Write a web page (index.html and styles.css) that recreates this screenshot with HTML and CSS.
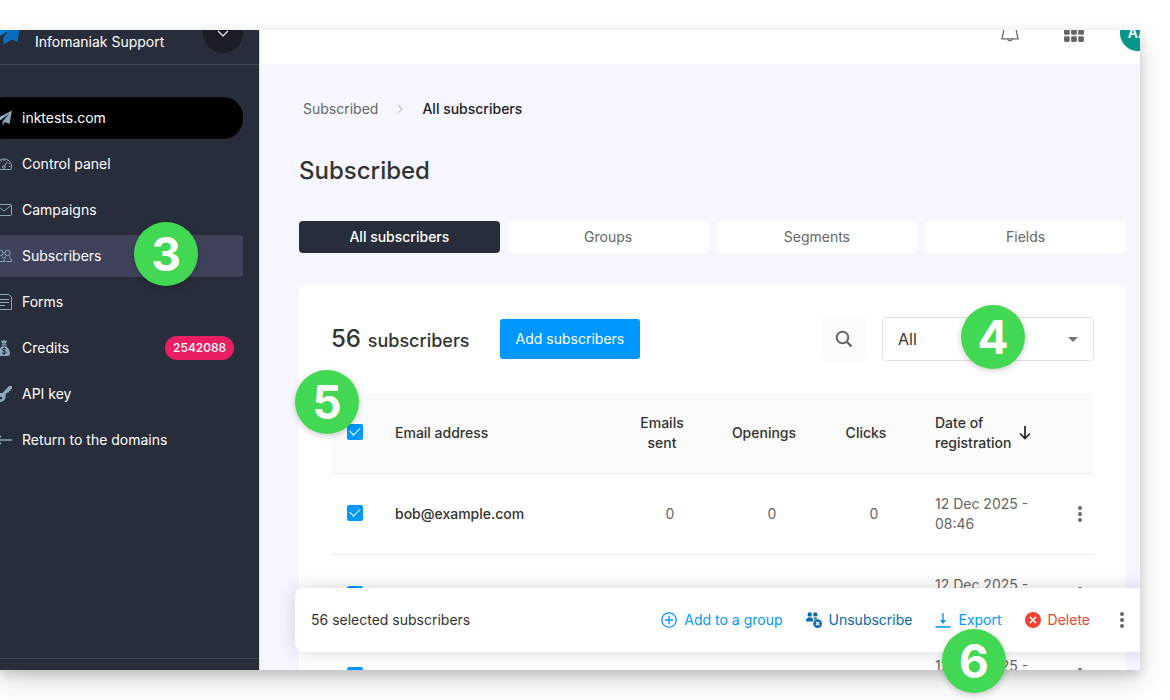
FILE: index.html
```html
<!DOCTYPE html>
<html lang="en">
  <head>
    <meta charset="UTF-8" />
    <meta name="viewport" content="width=device-width, initial-scale=1.0" />
    <title>Subscribed</title>
    <link rel="stylesheet" href="styles.css">
  </head>
  <body>
    <div class="stage">
      <div class="window">
        <aside class="sidebar">
          <div class="account">
            <svg class="account-logo" width="24" height="30" viewBox="0 0 24 30">
              <path d="M24.500 8L21.500 26 16 23.500 7.500 28.500V21L13 14.500 16 8z" fill="#0a6ebd" />
              <path d="M0 14h14l-6 3.500-4 2.500-4-1z" fill="#0b7fd6" />
            </svg>
            <span class="account-name">Infomaniak Support</span>
            <button class="account-toggle" aria-label="Switch account">
              <svg width="12" height="8" viewBox="0 0 12 8" fill="none" stroke="#fff" stroke-width="1.2">
                <path d="M1 1l5 5 5-5" />
              </svg>
            </button>
          </div>
          <nav class="menu">
            <a class="menu-item domain" href="#">
              <svg class="menu-icon" viewBox="0 0 16 16" fill="#8ba7b8">
                <path d="M16 0.500L13.500 14l-4.800-2L6.500 15.500V11.500L13 4 4.500 10.200 0 8.700z" />
              </svg>
              inktests.com
            </a>
            <a class="menu-item" href="#">
              <svg class="menu-icon" viewBox="0 0 16 16" fill="none" stroke="#8ba7b8">
                <path d="M1.500 13.500C-1 9 2 3 8 3s9 6 7 10.500zM8 11l3-5M8 3v2M3 6l1.300 1M14 7l-1.500.8M2 10h1.500M13 10.500h1.500M4.500 4l1 1.500M12 4.500l-.5.8" />
                <circle cx="7.800" cy="11" r="1.300" />
              </svg>
              Control panel
            </a>
            <a class="menu-item" href="#">
              <svg class="menu-icon" viewBox="0 0 16 16" fill="none" stroke="#8ba7b8">
                <rect x="0.500" y="2.500" width="15" height="11" rx="1" />
                <path d="M1 3.500l7 5.500 7-5.500" />
              </svg>
              Campaigns
            </a>
            <a class="menu-item selected" href="#">
              <svg class="menu-icon" viewBox="0 0 16 16" fill="none" stroke="#8ba7b8">
                <circle cx="4.500" cy="5" r="2.700" />
                <circle cx="11.500" cy="5" r="2.700" />
                <path d="M.5 13.500c0-3 1.500-3.500 3-4.500M6 9c1.500 1 2.500 1.500 3 4.500h-8.500M10 8.500c-1 1-1.500 1-2.500 1.700M13 8.500c1.500 1.500 2.500 2 2.500 5h-5" />
              </svg>
              Subscribers
            </a>
            <a class="menu-item" href="#">
              <svg class="menu-icon" viewBox="0 0 16 16" fill="none" stroke="#8ba7b8">
                <path d="M.5.500h12l3 2.500v12.500H.5zM3 5.500h10M3 8.500h10M3 11.500h6" />
              </svg>
              Forms
            </a>
            <a class="menu-item" href="#">
              <svg class="menu-icon" viewBox="0 0 16 16">
                <path d="M5 0l1.500 1L8 0l1.500 1L11 0l-1 3.500H6zM5.500 4.300h5v1.200h-5zM6 6.200h4c2.500 2 4 4.500 4 7 0 1.800-1 2.800-2.500 2.800h-7C3 16 2 15 2 13.200c0-2.500 1.500-5 4-7z" fill="#8ba7b8" />
                <path d="M10 9c-1-1-3.500-.8-3.500.7S10 11 10 12.500s-3 1.500-4 .4M8.200 7.500V15" fill="none" stroke="#282d3b" />
              </svg>
              Credits
              <span class="credits">2542088</span>
            </a>
            <a class="menu-item" href="#">
              <svg class="menu-icon" viewBox="0 0 16 16">
                <path d="M13 0h3v3l-1.500.5V5H13v1.500h-1.500L9.500 8.500c1 4-1.500 7.500-5.500 7.500C1.500 16 0 14 0 12c0-3.500 3-5.500 6.500-5z" fill="#8ba7b8" />
                <circle cx="5" cy="12" r="1.300" fill="#282d3b" />
              </svg>
              API key
            </a>
            <a class="menu-item" href="#">
              <svg class="menu-icon" viewBox="0 0 16 16" fill="none" stroke="#8ba7b8" stroke-width="1.500">
                <path d="M0 8h16M5 4L1 8l4 4" />
              </svg>
              Return to the domains
            </a>
          </nav>
          <div class="sidebar-footer"></div>
        </aside>

        <div class="content">
          <header class="topbar">
            <button class="icon-button bell" aria-label="Notifications">
              <svg width="18" height="20" viewBox="0 0 18 20" fill="none" stroke="#666" stroke-width="1.300">
                <path d="M1 16.800L2.800 8C3.500 4 5 1.500 9 1.500s5.500 2.500 6.200 6.500L17 16.800zM6.500 17c.5 2.600 4.500 2.600 5 0" />
              </svg>
            </button>
            <button class="icon-button apps" aria-label="Applications">
              <svg width="20" height="20" viewBox="0 0 20 20" fill="#666">
                <rect width="5.700" height="5.700" rx="1.300" /><rect x="7.100" width="5.700" height="5.700" rx="1.300" /><rect x="14.200" width="5.700" height="5.700" rx="1.300" />
                <rect y="7.100" width="5.700" height="5.700" rx="1.300" /><rect x="7.100" y="7.100" width="5.700" height="5.700" rx="1.300" /><rect x="14.200" y="7.100" width="5.700" height="5.700" rx="1.300" />
                <rect y="14.200" width="5.700" height="5.700" rx="1.300" /><rect x="7.100" y="14.200" width="5.700" height="5.700" rx="1.300" /><rect x="14.200" y="14.200" width="5.700" height="5.700" rx="1.300" />
              </svg>
            </button>
            <button class="avatar">AA</button>
          </header>

          <main class="page">
            <nav class="breadcrumb">
              <a href="#">Subscribed</a>
              <svg width="6" height="10" viewBox="0 0 6 10" fill="none" stroke="#aaa">
                <path d="M1 1l4 4-4 4" />
              </svg>
              <strong>All subscribers</strong>
            </nav>
            <h1>Subscribed</h1>

            <div class="tabs">
              <button class="tab active">All subscribers</button>
              <button class="tab">Groups</button>
              <button class="tab">Segments</button>
              <button class="tab">Fields</button>
            </div>

            <section class="card">
              <div class="toolbar">
                <h2 class="count"><span class="count-number">56</span> subscribers</h2>
                <button class="add-button">Add subscribers</button>
                <button class="search-button" aria-label="Search">
                  <svg width="18" height="18" viewBox="0 0 18 18" fill="none" stroke="#666" stroke-width="2">
                    <circle cx="7.500" cy="7.500" r="5.800" />
                    <path d="M12 12l4.500 4.500" stroke-width="2.400" />
                  </svg>
                </button>
                <div class="filter">
                  <select aria-label="Filter">
                    <option>All</option>
                  </select>
                  <svg class="filter-arrow" width="10" height="5" viewBox="0 0 10 5" fill="#757575">
                    <path d="M0 0h10L5 5z" />
                  </svg>
                </div>
              </div>

              <table class="list">
                <colgroup>
                  <col class="col-check" />
                  <col />
                  <col class="col-number" />
                  <col class="col-number" />
                  <col class="col-number" />
                  <col class="col-date" />
                  <col class="col-more" />
                </colgroup>
                <thead>
                  <tr>
                    <th><input type="checkbox" class="tick" aria-label="Select all" checked /></th>
                    <th class="email">Email address</th>
                    <th class="number">Emails<br />sent</th>
                    <th class="number">Openings</th>
                    <th class="number">Clicks</th>
                    <th class="date">
                      <span class="sort">
                        <span>Date of<br />registration</span>
                        <svg width="12" height="14" viewBox="0 0 12 14" fill="none" stroke="#222" stroke-width="1.700">
                          <path d="M6 0v12.500M1 7.500l5 5 5-5" />
                        </svg>
                      </span>
                    </th>
                    <th></th>
                  </tr>
                </thead>
                <tbody>
                  <tr>
                    <td><input type="checkbox" class="tick" aria-label="Select bob@example.com" checked /></td>
                    <td class="email">bob@example.com</td>
                    <td class="number">0</td>
                    <td class="number">0</td>
                    <td class="number">0</td>
                    <td class="date">12 Dec 2025 -<br />08:46</td>
                    <td class="more"><button class="dots" aria-label="More"><i></i><i></i><i></i></button></td>
                  </tr>
                  <tr>
                    <td><input type="checkbox" class="tick" aria-label="Select row" checked /></td>
                    <td class="email"></td>
                    <td class="number"></td>
                    <td class="number"></td>
                    <td class="number"></td>
                    <td class="date">12 Dec 2025 -<br />&nbsp;</td>
                    <td class="more"><button class="dots" aria-label="More"><i></i><i></i><i></i></button></td>
                  </tr>
                  <tr>
                    <td><input type="checkbox" class="tick" aria-label="Select row" checked /></td>
                    <td class="email"></td>
                    <td class="number"></td>
                    <td class="number"></td>
                    <td class="number"></td>
                    <td class="date">12 Dec 2025 -<br />&nbsp;</td>
                    <td class="more"><button class="dots" aria-label="More"><i></i><i></i><i></i></button></td>
                  </tr>
                </tbody>
              </table>
            </section>
          </main>

          <div class="action-bar">
            <span class="selected-count">56 selected subscribers</span>
            <button class="action add">
              <svg width="16" height="16" viewBox="0 0 16 16" fill="none" stroke="currentColor" stroke-width="1.300">
                <circle cx="8" cy="8" r="7.200" />
                <path d="M8 3.700v8.600M3.700 8h8.600" />
              </svg>
              Add to a group
            </button>
            <button class="action unsubscribe">
              <svg width="16" height="16" viewBox="0 0 16 16" fill="currentColor">
                <circle cx="3.700" cy="2.400" r="2.200" />
                <circle cx="9.300" cy="2.400" r="2.200" />
                <path d="M0 9.500c0-3 1.500-4.200 3.700-4.200S7 6.500 7 7.500v2zM7.800 5.700c1.500-.6 3.200-.3 4 1.100-1.700 0-2.700.4-3.600 1.300z" />
                <circle cx="11.600" cy="11.600" r="4.400" />
                <path d="M9.900 9.900l3.400 3.400M13.300 9.900l-3.400 3.400" stroke="#fff" stroke-width="1.300" />
              </svg>
              Unsubscribe
            </button>
            <button class="action export">
              <svg width="16" height="16" viewBox="0 0 16 16" fill="none" stroke="currentColor" stroke-width="1.400">
                <path d="M.5 15h15M8 1v9" />
                <path d="M5 8h6l-3 4z" fill="currentColor" stroke="none" />
              </svg>
              Export
            </button>
            <button class="action delete">
              <svg width="16" height="16" viewBox="0 0 16 16">
                <circle cx="8" cy="8" r="8" fill="currentColor" />
                <path d="M4.800 4.800l6.400 6.400M11.200 4.800l-6.400 6.400" stroke="#fff" stroke-width="1.500" />
              </svg>
              Delete
            </button>
            <button class="dots" aria-label="More actions"><i></i><i></i><i></i></button>
          </div>
        </div>
      </div>

      <!-- step markers -->
      <span class="step step-3">3</span>
      <span class="step step-4">4</span>
      <span class="step step-5">5</span>
      <span class="step step-6">6</span>
    </div>
  </body>
</html>
```

FILE: styles.css
```css
* {
  box-sizing: border-box;
}
body {
  margin: 0;
  background: #fff;
  color: #333;
  font: 14px/20px Inter, "Liberation Sans", sans-serif;
}
button,
select {
  font: inherit;
  color: inherit;
}
button {
  border: 0;
  padding: 0;
  background: none;
  cursor: pointer;
}
a {
  color: inherit;
  text-decoration: none;
}
svg {
  display: block;
  flex: none;
}

.stage {
  position: relative;
  height: 100vh;
  padding: 30px 30px 30px 0;
  overflow: hidden;
}
.window {
  display: flex;
  height: 100%;
  overflow: hidden;
  box-shadow: 0 12px 28px rgba(0, 0, 0, 0.14), 0 5px 10px rgba(0, 0, 0, 0.15);
}

/* sidebar */
.sidebar {
  display: flex;
  flex-direction: column;
  flex: none;
  width: 260px;
  background: #282d3b;
  border-right: 1px solid #dcdce6;
  color: #fff;
}
.account {
  display: flex;
  align-items: flex-end;
  height: 35px;
  padding-right: 16px;
  border-bottom: 1px solid #40435b;
}
.account-logo {
  margin: 0 15px 18px -4px;
}
.account-name {
  margin-bottom: 12px;
}
.account-toggle {
  display: flex;
  justify-content: center;
  width: 40px;
  height: 40px;
  margin: 0 0 11px auto;
  padding-top: 17px;
  border-radius: 50%;
  background: #1b1d27;
}
.menu {
  display: flex;
  flex-direction: column;
  gap: 4px;
  margin: 32px 16px 0 -16px;
}
.menu-item {
  display: flex;
  align-items: center;
  gap: 10px;
  height: 42px;
  padding: 0 9px 0 12px;
  border-radius: 4px;
}
.menu-icon {
  width: 16px;
  height: 16px;
}
.domain {
  background: #000;
  border-radius: 20px;
}
.selected {
  background: #40425b;
}
.credits {
  margin-left: auto;
  padding: 2px 8px;
  border-radius: 12px;
  background: #e91e63;
  font-size: 12px;
  font-weight: 500;
}
.sidebar-footer {
  height: 12px;
  margin-top: auto;
  border-top: 1px solid #40435b;
}

/* top bar */
.content {
  position: relative;
  flex: 1;
  min-width: 0;
  background: #f5f6ff;
}
.topbar {
  display: flex;
  justify-content: flex-end;
  align-items: flex-end;
  height: 35px;
  margin-right: -16px;
  background: #fff;
  border-bottom: 1px solid #f7f7fb;
}
.icon-button {
  margin-bottom: 22px;
}
.bell {
  margin-right: 45px;
}
.apps {
  margin-right: 36px;
}
.avatar {
  width: 36px;
  height: 36px;
  margin-bottom: 13px;
  border-radius: 50%;
  background: #059688;
  color: #fff;
  font-weight: 600;
}

/* page */
.page {
  padding: 34px 14px 0 39px;
}
.breadcrumb {
  display: flex;
  align-items: center;
  gap: 19px;
  padding-left: 4px;
  color: #666;
}
.breadcrumb strong {
  color: #222;
  font-weight: 500;
}
h1 {
  margin: 36px 0 34px;
  font-size: 24px;
  line-height: 32px;
  font-weight: 500;
}
.tabs {
  display: grid;
  grid-template-columns: repeat(4, 1fr);
  gap: 8px;
}
.tab {
  height: 32px;
  border-radius: 4px;
  background: #fff;
  color: #666;
}
.tab.active {
  background: #282d3b;
  color: #fff;
  font-weight: 500;
}
.card {
  margin-top: 32px;
  padding: 32px;
  border-radius: 6px;
  background: #fff;
}
.toolbar {
  display: flex;
  align-items: center;
  height: 44px;
  margin-bottom: 32px;
}
.count {
  margin: 2px 30px 0 0;
  font-size: 18px;
  line-height: 32px;
  font-weight: 500;
}
.count-number {
  margin-right: 2px;
  font-size: 24px;
}
.add-button {
  height: 40px;
  padding: 0 16px;
  border-radius: 3px;
  background: #0098ff;
  color: #fff;
}
.search-button {
  display: flex;
  align-items: center;
  justify-content: center;
  width: 44px;
  height: 44px;
  margin: 0 16px 0 auto;
  border-radius: 4px;
  background: #fafafa;
}
.filter {
  position: relative;
  width: 212px;
}
.filter select {
  display: block;
  width: 100%;
  height: 44px;
  padding: 0 15px;
  appearance: none;
  border: 1px solid #e0e0e0;
  border-radius: 4px;
  background: #fff;
  font-size: 16px;
}
.filter-arrow {
  position: absolute;
  top: 20px;
  right: 16px;
  pointer-events: none;
}

/* list */
.list {
  width: 100%;
  table-layout: fixed;
  border-collapse: separate;
  border-spacing: 0;
}
.col-check {
  width: 48px;
}
.col-number {
  width: 102px;
}
.col-date {
  width: 149px;
}
.col-more {
  width: 28px;
}
.list th,
.list td {
  height: 81px;
  padding: 0 0 0 16px;
  border-bottom: 1px solid #eee;
  text-align: left;
}
.list th {
  background: #fafafa;
  font-weight: 500;
}
.list td {
  color: #666;
}
.list td.email {
  color: #333;
  font-weight: 500;
}
.list .number {
  text-align: center;
}
.list th.number {
  padding-left: 0;
}
.list .date {
  padding-left: 18px;
}
.list td.more {
  padding: 0;
}
.sort {
  display: flex;
  align-items: center;
  gap: 8px;
}
.tick {
  display: grid;
  place-items: center;
  width: 16px;
  height: 16px;
  margin: 0 0 3px;
  appearance: none;
  border-radius: 2px;
  background: #0098ff;
}
.tick:checked::after {
  content: "";
  width: 9px;
  height: 5px;
  margin-bottom: 3px;
  border: solid #fff;
  border-width: 0 0 1px 1px;
  transform: rotate(-45deg);
}
.dots {
  display: flex;
  flex-direction: column;
  align-items: center;
  gap: 2px;
  width: 4px;
  margin: 0 auto;
}
.dots i {
  width: 4px;
  height: 4px;
  border-radius: 50%;
  background: #666;
}

/* bar over the list */
.action-bar {
  position: absolute;
  left: 35px;
  right: -8px;
  bottom: 18px;
  display: flex;
  align-items: center;
  gap: 23px;
  height: 64px;
  padding: 0 24px 0 16px;
  border-radius: 8px;
  background: #fff;
  box-shadow: 0 0 20px rgba(0, 0, 0, 0.16);
}
.selected-count {
  margin-right: auto;
}
.action {
  display: flex;
  align-items: center;
  gap: 7px;
}
.add,
.export {
  color: #0098ff;
}
.unsubscribe {
  color: #0a69b0;
}
.delete {
  color: #f44336;
}
.action-bar .dots {
  margin: 0 0 0 7px;
}

/* step markers */
.step {
  position: absolute;
  width: 64px;
  height: 64px;
  border-radius: 50%;
  background: #43d854;
  box-shadow: 0 2px 6px rgba(0, 0, 0, 0.2);
  color: #fff;
  font: bold 46px/64px Inter, "Liberation Sans", sans-serif;
  text-align: center;
}
.step-3 {
  top: 222px;
  left: 134px;
}
.step-4 {
  top: 305px;
  right: 145px;
}
.step-5 {
  top: 370px;
  left: 295px;
}
.step-6 {
  bottom: 7px;
  right: 164px;
}
```
